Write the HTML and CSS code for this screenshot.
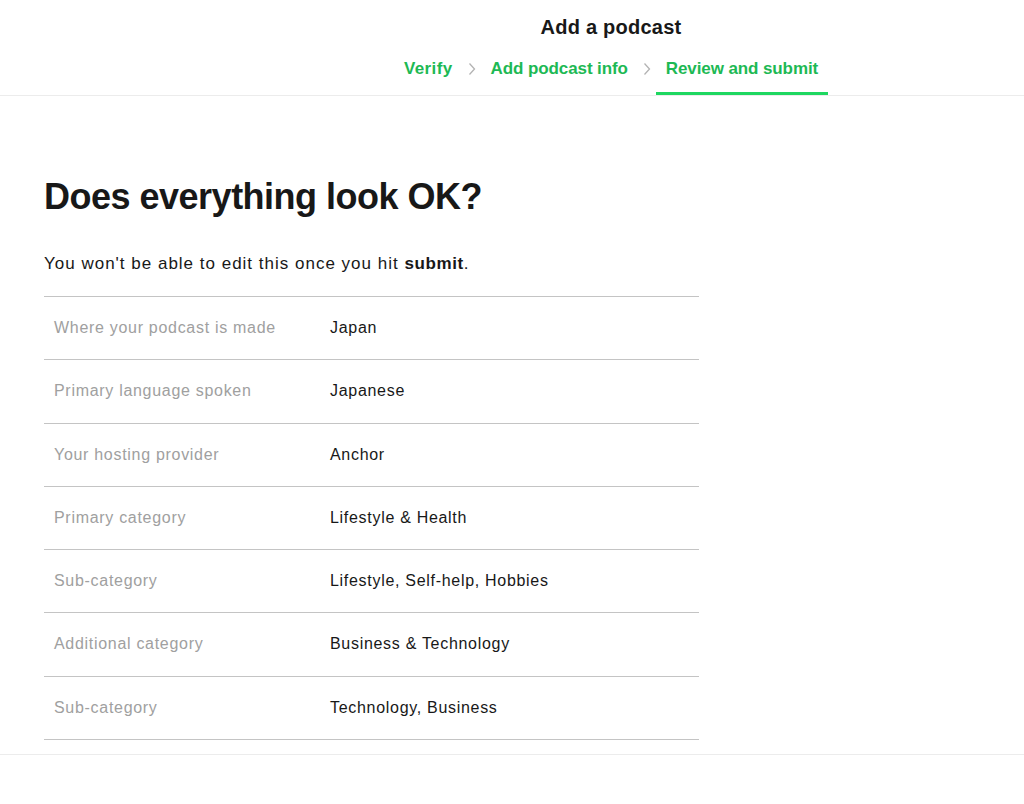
FILE: index.html
```html
<!DOCTYPE html>
<html lang="en">
<head>
<meta charset="utf-8">
<title>Add a podcast</title>
<link rel="stylesheet" href="styles.css">
</head>
<body>
<header class="topbar">
  <div class="topbar-inner">
    <h1 class="topbar-title">Add a podcast</h1>
    <nav class="steps">
      <span class="step">Verify</span>
      <svg class="chev" viewBox="0 0 8 14" width="8" height="14"><path d="M1.5 1.5l5 5.5-5 5.5" fill="none" stroke="#b3b3b3" stroke-width="1.3"/></svg>
      <span class="step">Add podcast info</span>
      <svg class="chev" viewBox="0 0 8 14" width="8" height="14"><path d="M1.5 1.5l5 5.5-5 5.5" fill="none" stroke="#b3b3b3" stroke-width="1.3"/></svg>
      <span class="step step-active">Review and submit</span>
    </nav>
  </div>
</header>
<main class="content">
  <h2 class="heading">Does everything look OK?</h2>
  <p class="lead">You won't be able to edit this once you hit <strong>submit</strong>.</p>
  <table class="summary">
    <tbody>
      <tr><th>Where your podcast is made</th><td>Japan</td></tr>
      <tr><th>Primary language spoken</th><td>Japanese</td></tr>
      <tr><th>Your hosting provider</th><td>Anchor</td></tr>
      <tr><th>Primary category</th><td>Lifestyle &amp; Health</td></tr>
      <tr><th>Sub-category</th><td>Lifestyle, Self-help, Hobbies</td></tr>
      <tr><th>Additional category</th><td>Business &amp; Technology</td></tr>
      <tr><th>Sub-category</th><td>Technology, Business</td></tr>
    </tbody>
  </table>
</main>
<footer class="footer"></footer>
</body>
</html>
```
FILE: styles.css
```css
* { box-sizing: border-box; }
html, body { margin: 0; padding: 0; background: #fff; }
body {
  font-family: "Liberation Sans", Arial, sans-serif;
  color: #181818;
  width: 1024px;
}
.topbar {
  border-bottom: 1px solid #ececec;
  padding-left: 198px;
}
.topbar-inner {
  display: flex;
  flex-direction: column;
  align-items: center;
}
.topbar-title {
  margin: 15px 0 0;
  font-size: 20px;
  line-height: 24px;
  font-weight: 700;
  color: #181818;
  letter-spacing: 0.25px;
}
.steps {
  display: flex;
  align-items: flex-start;
  gap: 5px;
  margin-top: 15px;
  height: 41px;
}
.step {
  font-size: 17px;
  font-weight: 700;
  color: #1db954;
  height: 41px;
  line-height: 22px;
  padding: 4px 10px 0;
  letter-spacing: -0.1px;
}
.step:first-child { letter-spacing: 0.4px; }
.step-active {
  border-bottom: 3px solid #1ed760;
}
.chev { display: block; margin-top: 8px; }
.content {
  padding: 79px 0 0 44px;
}
.heading {
  margin: 0;
  font-size: 36px;
  line-height: 44px;
  font-weight: 700;
  letter-spacing: -0.5px;
  color: #181818;
}
.lead {
  margin: 33px 0 0;
  font-size: 17px;
  line-height: 24px;
  letter-spacing: 1px;
  color: #181818;
}
.lead strong { font-weight: 700; letter-spacing: 0.6px; }
.summary {
  margin-top: 20px;
  width: 655px;
  border-collapse: collapse;
  border-top: 1px solid #c4c4c4;
}
.summary tr { border-bottom: 1px solid #c4c4c4; }
.summary th, .summary td {
  padding: 20px 0 20px 10px;
  font-size: 16px;
  line-height: 22.3px;
  letter-spacing: 0.7px;
  text-align: left;
  vertical-align: middle;
}
.summary th {
  width: 286px;
  font-weight: 400;
  color: #a0a0a0;
}
.summary td {
  padding-left: 0;
  color: #181818;
}
.footer {
  margin-top: 14px;
  border-top: 1px solid #ececec;
}
```
